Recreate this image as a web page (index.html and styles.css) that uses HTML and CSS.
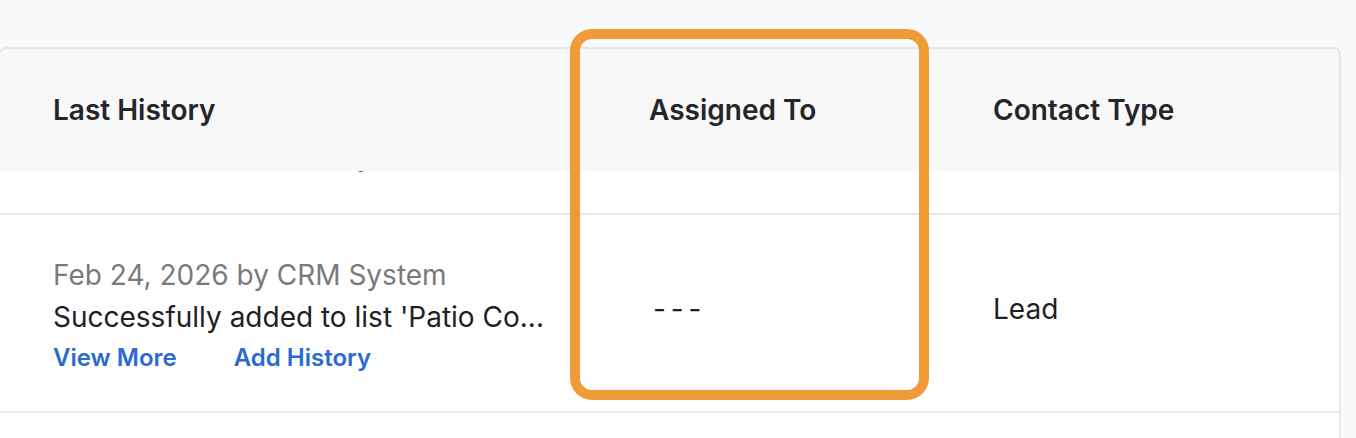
FILE: index.html
```html
<!DOCTYPE html>
<html lang="en">
<head>
<meta charset="utf-8">
<title>Contacts table</title>
<link rel="stylesheet" href="styles.css">
</head>
<body>
<div class="page">
  <div class="card">
    <div class="thead">
      <div class="th th-history">Last History</div>
      <div class="th th-assigned">Assigned To</div>
      <div class="th th-type">Contact Type</div>
    </div>
    <div class="row row-clipped">
      <div class="cell cell-history">
        <div class="links links-clipped">
          <a class="link" href="#">View More</a>
          <a class="link" href="#">Add History</a>
        </div>
      </div>
      <div class="cell"></div>
      <div class="cell"></div>
    </div>
    <div class="row row-main">
      <div class="cell cell-history">
        <div class="meta">Feb 24, 2026 by CRM System</div>
        <div class="desc">Successfully added to list 'Patio Co...</div>
        <div class="links">
          <a class="link" href="#">View More</a>
          <a class="link" href="#">Add History</a>
        </div>
      </div>
      <div class="cell cell-assigned">- - -</div>
      <div class="cell cell-type">Lead</div>
    </div>
    <div class="row row-next">
      <div class="cell"></div>
      <div class="cell"></div>
      <div class="cell"></div>
    </div>
  </div>
  <div class="highlight"></div>
</div>
</body>
</html>
```
FILE: styles.css
```css
* { box-sizing: border-box; }

html, body {
  margin: 0;
  padding: 0;
  background: #f8f9fb;
  font-family: Inter, "Noto Sans", "Liberation Sans", sans-serif;
  color: #23252b;
  overflow: hidden;
}

.page {
  position: relative;
  width: 1356px;
  height: 438px;
  padding-top: 47px;
}

.card {
  margin-left: -2px;
  width: 1343px;
  background: #ffffff;
  border: 2px solid #e7e7e8;
  border-bottom: none;
  border-radius: 8px 8px 0 0;
  overflow: hidden;
  height: 391px;
}

.thead,
.row {
  display: grid;
  grid-template-columns: 625px 343px 1fr;
}

.thead {
  height: 122px;
  background: #f8f8f8;
  align-items: center;
}

.th {
  font-size: 28px;
  font-weight: 600;
  line-height: 41px;
  color: #24262c;
  padding-left: 24px;
}

.th-history { padding-left: 53px; }
.th-type { padding-left: 25px; }

.row {
  border-bottom: 2px solid #e8e8e9;
  background: #ffffff;
}

.row-clipped {
  height: 44px;
  overflow: hidden;
}

.row-main {
  height: 198px;
}

.row-next {
  height: 25px;
  border-bottom: none;
}

.cell {
  font-size: 28px;
  line-height: 42px;
  color: #1f2126;
  padding-left: 24px;
}

.cell-history {
  padding-left: 53px;
  padding-top: 39px;
}

.row-clipped .cell-history { padding-top: 0; }

.cell-assigned {
  padding-top: 73px;
  padding-left: 28px;
  letter-spacing: -1.5px;
}

.cell-type {
  padding-top: 73px;
  padding-left: 25px;
}

.meta {
  color: #7a7a7c;
}

.desc {
  color: #1f2126;
}

.links {
  display: flex;
  gap: 57px;
  font-size: 24px;
  line-height: 40px;
}

.links-clipped {
  margin-top: -32px;
}

.link {
  color: #2b6bcf;
  font-weight: 600;
  text-decoration: none;
}

.highlight {
  position: absolute;
  left: 570px;
  top: 29px;
  width: 359px;
  height: 371px;
  border: 10px solid #f19a38;
  border-radius: 22px;
  pointer-events: none;
}
```
